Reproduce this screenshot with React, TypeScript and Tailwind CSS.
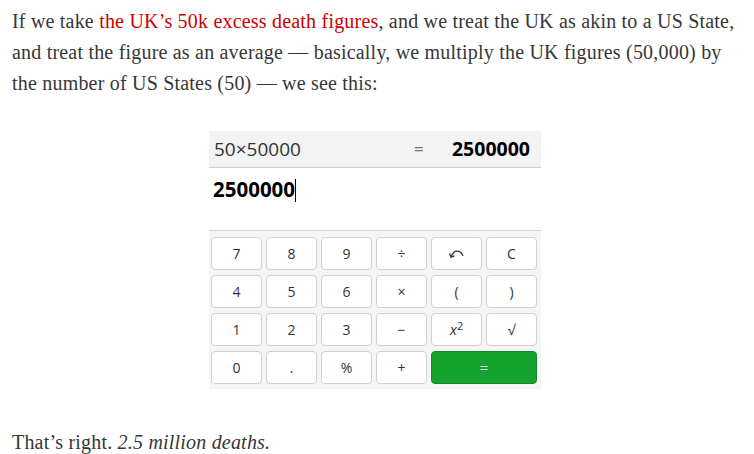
import React from "react"

const keys: { label: string; key: string }[] = [
    { key: "7", label: "7" },
    { key: "8", label: "8" },
    { key: "9", label: "9" },
    { key: "div", label: "÷" },
    { key: "undo", label: "undo" },
    { key: "C", label: "C" },
    { key: "4", label: "4" },
    { key: "5", label: "5" },
    { key: "6", label: "6" },
    { key: "mul", label: "×" },
    { key: "(", label: "(" },
    { key: ")", label: ")" },
    { key: "1", label: "1" },
    { key: "2", label: "2" },
    { key: "3", label: "3" },
    { key: "minus", label: "−" },
    { key: "sq", label: "sq" },
    { key: "sqrt", label: "√" },
    { key: "0", label: "0" },
    { key: ".", label: "." },
    { key: "%", label: "%" },
    { key: "+", label: "+" },
]

const UndoIcon = () => (
    <svg width="18" height="11" viewBox="0 0 18 11" fill="none" stroke="#333" strokeWidth="1.3">
        <path d="M3.5 8 C6 1.5 12.5 1.5 15 8" />
        <path d="M1.5 5.5 L3 9.2 L6.5 7.8" />
    </svg>
)

const Calculator = () => {
    return (
        <div className="w-[332px] ml-[197px] mt-[32px] font-['Open_Sans',sans-serif] text-[#333]">
            <div className="h-[37px] bg-[#f3f3f3] border-b border-[#cfcfcf] flex items-center pl-[5px] pr-[11px]">
                <div className="flex-1 text-[19px]">50×50000</div>
                <div className="w-[38px] text-[17px] text-[#777]">=</div>
                <div className="text-[19.5px] font-bold text-black">2500000</div>
            </div>
            <div className="h-[63px] border-b border-[#d4d4d4] pl-[4px] pt-[6px]">
                <span className="text-[20.5px] font-bold text-black">2500000</span>
                <span className="inline-block w-px h-[23px] bg-black align-[-5px]"></span>
            </div>
            <div className="bg-[#f5f5f5] pl-[2px] pr-[4px] pt-[6px] pb-[5px] grid grid-cols-6 gap-x-[4px] gap-y-[5px]">
                {keys.map((k) => (
                    <button
                        key={k.key}
                        className="h-[33px] bg-white border border-[#d0d0d0] rounded-[4px] text-[14px] text-[#333] flex items-center justify-center"
                    >
                        {k.label === "undo" ? (
                            <UndoIcon />
                        ) : k.label === "sq" ? (
                            <span className="italic text-[15px]">
                                x<sup className="not-italic text-[11px]">2</sup>
                            </span>
                        ) : (
                            k.label
                        )}
                    </button>
                ))}
                <button className="col-span-2 h-[33px] bg-[#15a32d] border border-[#128a25] rounded-[4px] text-[14px] text-white flex items-center justify-center">
                    =
                </button>
            </div>
        </div>
    )
}

export default function App() {
    return (
        <div className="w-[754px] h-[454px] bg-white overflow-hidden px-[12px] pt-[6px] font-['Liberation_Serif',serif] text-[#363737]">
            <p className="text-[20px] leading-[31px] tracking-[0.2px] whitespace-nowrap">
                If we take <span className="text-[#cc0000]">the UK’s 50k excess death figures</span>, and we treat the UK as akin to a US State,
                <br />
                and treat the figure as an average — basically, we multiply the UK figures (50,000) by
                <br />
                the number of US States (50) — we see this:
            </p>
            <Calculator />
            <p className="mt-[38px] text-[20px] leading-[31px] tracking-[0.2px]">
                That’s right. <em>2.5 million deaths.</em>
            </p>
        </div>
    )
}
